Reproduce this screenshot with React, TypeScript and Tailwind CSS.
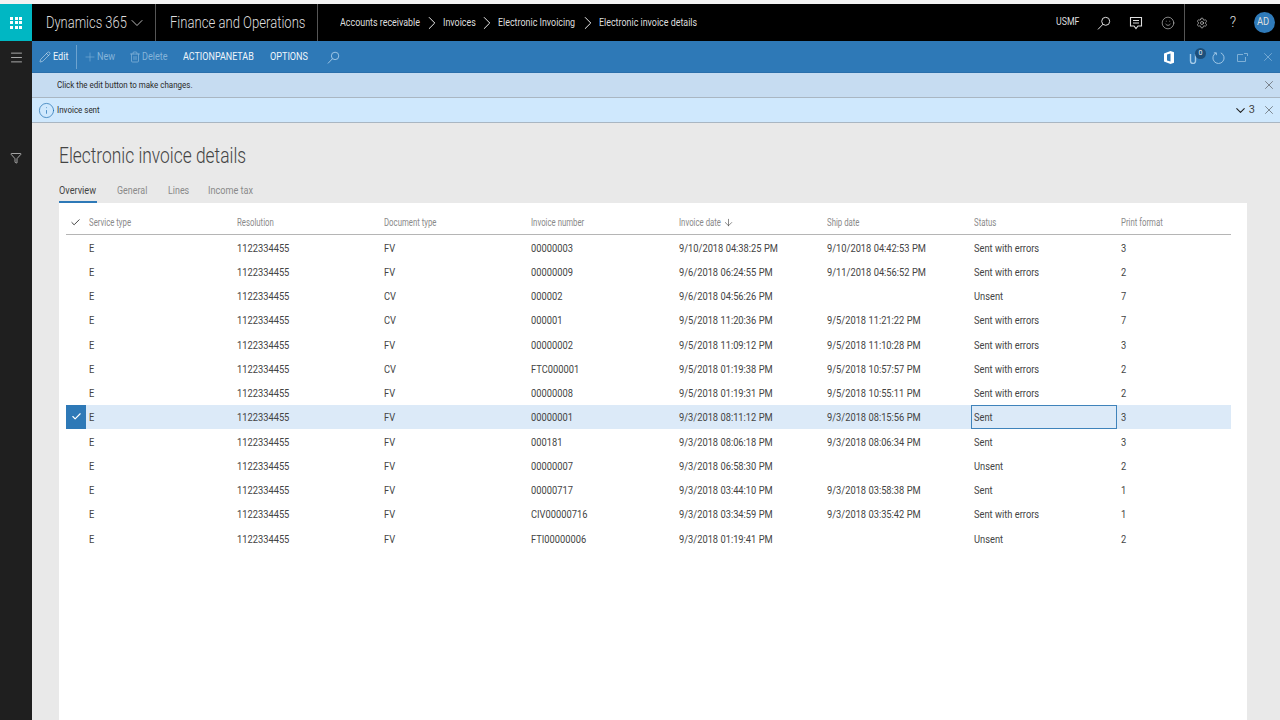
import React from "react";
import { Pencil, Plus, Trash2, Menu, ChevronDown, ChevronRight, X, Smile, Settings, Check, Filter, Info, ArrowDown } from "lucide-react";

const rows = [
  ["00000003", "9/10/2018 04:38:25 PM", "9/10/2018 04:42:53 PM", "Sent with errors", "3", "FV"],
  ["00000009", "9/6/2018 06:24:55 PM", "9/11/2018 04:56:52 PM", "Sent with errors", "2", "FV"],
  ["000002", "9/6/2018 04:56:26 PM", "", "Unsent", "7", "CV"],
  ["000001", "9/5/2018 11:20:36 PM", "9/5/2018 11:21:22 PM", "Sent with errors", "7", "CV"],
  ["00000002", "9/5/2018 11:09:12 PM", "9/5/2018 11:10:28 PM", "Sent with errors", "3", "FV"],
  ["FTC000001", "9/5/2018 01:19:38 PM", "9/5/2018 10:57:57 PM", "Sent with errors", "2", "CV"],
  ["00000008", "9/5/2018 01:19:31 PM", "9/5/2018 10:55:11 PM", "Sent with errors", "2", "FV"],
  ["00000001", "9/3/2018 08:11:12 PM", "9/3/2018 08:15:56 PM", "Sent", "3", "FV"],
  ["000181", "9/3/2018 08:06:18 PM", "9/3/2018 08:06:34 PM", "Sent", "3", "FV"],
  ["00000007", "9/3/2018 06:58:30 PM", "", "Unsent", "2", "FV"],
  ["00000717", "9/3/2018 03:44:10 PM", "9/3/2018 03:58:38 PM", "Sent", "1", "FV"],
  ["CIV00000716", "9/3/2018 03:34:59 PM", "9/3/2018 03:35:42 PM", "Sent with errors", "1", "FV"],
  ["FTI00000006", "9/3/2018 01:19:41 PM", "", "Unsent", "2", "FV"],
];

const columns = "grid grid-cols-[23px_148px_147px_147px_148px_148px_147px_147px_110px]";

// the screenshot is squeezed horizontally, so text is drawn narrower than its height
const T = ({ className, children }: { className?: string; children?: React.ReactNode }) => (
  <span className={`inline-block origin-left whitespace-nowrap ${className}`}>{children}</span>
);

const Cell = ({ children }: { children?: React.ReactNode }) => <T className="scale-x-[0.81] translate-y-[0.5px]">{children}</T>;
const Head = ({ children }: { children?: React.ReactNode }) => <T className="scale-x-[0.78]">{children}</T>;

const SearchIcon = ({ className }: { className?: string }) => (
  <svg viewBox="0 0 14 14" fill="none" stroke="currentColor" strokeWidth="1" className={className}>
    <circle cx="8.7" cy="5.3" r="4" />
    <path d="M6 8.2 1 13.4" />
  </svg>
);

const Crumb = ({ className, children }: { className: string; children: React.ReactNode }) => (
  <span className="flex items-center">
    <T className={`scale-x-[0.81] ${className}`}>{children}</T>
    <ChevronRight className="w-[22px] h-[22px] mx-[0.5px] text-white" strokeWidth={1} />
  </span>
);

export default function App() {
  return (
    <div className="h-[720px] w-[1280px] overflow-hidden bg-[#f2f2f2] font-['Roboto',sans-serif] pt-[4px] flex flex-col">
      {/* top nav */}
      <div className="h-[37px] bg-black flex items-center text-[#dedede] shrink-0">
        <div className="w-[32px] h-full bg-[#00b7c3] flex items-center justify-center">
          <div className="grid grid-cols-3 gap-[1.5px]">
            {Array.from({ length: 9 }).map((_, i) => (
              <div key={i} className="w-[3px] h-[3px] bg-white" />
            ))}
          </div>
        </div>
        <div className="w-[124px] h-full flex items-center pl-[14px] border-r border-[#555] text-[17px] font-light">
          <T className="w-[80px] scale-x-[0.76]">Dynamics 365</T>
          <ChevronDown className="w-[20px] h-[20px] ml-[1px] shrink-0" strokeWidth={1} />
        </div>
        <div className="w-[162px] h-full flex items-center pl-[14px] border-r border-[#555] text-[17px] font-light">
          <T className="scale-x-[0.77]">Finance and Operations</T>
        </div>
        <div className="flex items-center pl-[22px] pt-[1px] text-[11px] flex-1">
          <Crumb className="w-[80px]">Accounts receivable</Crumb>
          <Crumb className="w-[32px]">Invoices</Crumb>
          <Crumb className="w-[78px]">Electronic Invoicing</Crumb>
          <T className="scale-x-[0.81]">Electronic invoice details</T>
        </div>
        <div className="h-full flex items-center text-[11px]">
          <T className="w-[24px] mr-[17px] scale-x-[0.8]">USMF</T>
          <SearchIcon className="w-[14px] h-[14px] mr-[18px]" />
          <svg viewBox="0 0 14 14" fill="none" stroke="currentColor" strokeWidth="1.1" className="w-[14px] h-[14px] mr-[18px]">
            <path d="M1.5 1.5h11v8.5H9L7 12.5 5 10H1.5z" />
            <path d="M4 4.5h6M4 7h6" />
          </svg>
          <Smile className="w-[14px] h-[14px] mr-[9px]" strokeWidth={1} />
          <div className="h-full border-l border-[#555] flex items-center pl-[11px]">
            <Settings className="w-[12px] h-[12px] mr-[21px]" strokeWidth={1.25} />
            <span className="w-[8px] text-center text-[14px] font-light mr-[17px]">?</span>
            <div className="w-[21px] h-[21px] rounded-full bg-[#2f7ab9] flex items-center justify-center mr-[5px]">
              <T className="origin-center scale-x-[0.85]">AD</T>
            </div>
          </div>
        </div>
      </div>

      <div className="flex flex-1 min-h-0">
        {/* left rail */}
        <div className="w-[32px] bg-[#1f1f1f] flex flex-col items-center shrink-0 text-[#d0d0d0]">
          <Menu className="w-[15px] h-[15px] mt-[9px]" strokeWidth={1.25} />
          <Filter className="w-[12px] h-[12px] mt-[87px]" strokeWidth={1.5} />
        </div>

        <div className="flex-1 bg-[#e9e9e9] flex flex-col min-w-0">
          {/* action pane */}
          <div className="h-[32px] pt-[1px] bg-[#2e79b7] border-b border-[#2a6fab] flex items-center text-[11.5px] text-[#f0f6fb] shrink-0">
            <Pencil className="w-[12px] h-[12px] ml-[7px] mr-[2px]" strokeWidth={1} />
            <T className="w-[15px] scale-x-[0.79]">Edit</T>
            <div className="w-px h-[24px] bg-[#6ea3cf] ml-[8px] mr-[6px]" />
            <Plus className="w-[14px] h-[14px] text-[#85b4d9]" strokeWidth={1} />
            <T className="w-[18px] scale-x-[0.79] text-[#85b4d9]">New</T>
            <Trash2 className="w-[12px] h-[12px] text-[#85b4d9] ml-[14px] mr-[1px]" strokeWidth={1.5} />
            <T className="w-[26px] scale-x-[0.79] text-[#85b4d9]">Delete</T>
            <T className="w-[72px] ml-[15px] scale-x-[0.78]">ACTIONPANETAB</T>
            <T className="w-[39px] ml-[15px] scale-x-[0.79]">OPTIONS</T>
            <SearchIcon className="w-[13px] h-[13px] ml-[18px] text-[#a6cbe8]" />
            <div className="flex-1" />
            <svg width="10" height="13" viewBox="0 0 10 13" className="mr-[13px]">
              <path d="M0 2.5 6.5 0 10 1.2v10.6L6.5 13 0 10.5zM3 3.5v6l3.5 1V2.5z" fill="#fff" />
            </svg>
            <div className="relative mr-[11px] w-[14px] h-[14px]">
              <svg width="8" height="13" viewBox="0 0 8 13" fill="none" stroke="#a6cbe8" strokeWidth="1.4" className="ml-[2px] mt-[1px]">
                <path d="M1.5 3v7a2.5 2.5 0 0 0 5 0V3" />
              </svg>
              <div className="absolute -top-[2px] left-[8px] w-[11px] h-[11px] rounded-full bg-[#1d4f7a] text-[7px] flex items-center justify-center">0</div>
            </div>
            <svg viewBox="0 0 14 14" fill="none" stroke="#a6cbe8" strokeWidth="1" className="w-[13px] h-[13px] mr-[12px]">
              <path d="M4.5 2a6 6 0 1 0 5 0" />
              <path d="M4.7 4.5V2H2" />
            </svg>
            <svg width="11" height="9" viewBox="0 0 11 9" className="mr-[13px]" fill="none" stroke="#7fb0d6">
              <path d="M6 1.5H.5v7h8V4M7 .5h3.5V3" />
            </svg>
            <X className="w-[14px] h-[14px] mr-[5px] text-[#a6cbe8]" strokeWidth={1} />
          </div>

          {/* messages */}
          <div className="h-[25px] bg-[#c6dcf1] border-b border-[#a9b6c2] flex items-center text-[9.5px] text-[#2a2a2a] shrink-0 pl-[25px] pr-[4px] justify-between">
            <T className="scale-x-[0.84]">Click the edit button to make changes.</T>
            <X className="w-[14px] h-[14px] text-[#444]" strokeWidth={1} />
          </div>
          <div className="h-[25px] bg-[#cfe8fd] border-b border-[#a9b6c2] flex items-center text-[9.5px] text-[#2a2a2a] shrink-0 pl-[6px] pr-[4px]">
            <Info className="w-[17px] h-[17px] mr-[2px] text-[#1f6fb0]" strokeWidth={1} />
            <span className="flex-1">
              <T className="scale-x-[0.84]">Invoice sent</T>
            </span>
            <ChevronDown className="w-[15px] h-[15px] text-[#222]" strokeWidth={1.75} />
            <span className="text-[11px] text-[#444] ml-[1px] mr-[7px]">3</span>
            <X className="w-[14px] h-[14px] text-[#444]" strokeWidth={1} />
          </div>

          <div className="flex-1 flex flex-col min-h-0 pl-[27px] pr-[33px]">
            <h1 className="text-[22px] font-light text-[#444] mt-[18px] leading-[30px]">
              <T className="scale-x-[0.79]">Electronic invoice details</T>
            </h1>
            <div className="flex text-[11px] leading-[16px] text-[#8a8a8a] mt-[12px] h-[20px] shrink-0">
              <span className="w-[38px] h-[20px] text-[#444] border-b-2 border-[#2e79b7]">
                <T className="scale-x-[0.83]">Overview</T>
              </span>
              <T className="w-[31px] ml-[20px] scale-x-[0.81]">General</T>
              <T className="w-[21px] ml-[20px] scale-x-[0.81]">Lines</T>
              <T className="w-[46px] ml-[19px] scale-x-[0.83]">Income tax</T>
            </div>

            {/* grid */}
            <div className="flex-1 bg-white pt-[7px] pl-[7px] pr-[16px] text-[11.5px] text-[#444]">
              <div className={`${columns} h-[25px] items-center border-b border-[#b5b5b5] text-[10px] text-[#8a8a8a]`}>
                <Check className="w-[11px] h-[11px] ml-[4px] text-[#333]" strokeWidth={2} />
                <Head>Service type</Head>
                <Head>Resolution</Head>
                <Head>Document type</Head>
                <Head>Invoice number</Head>
                <span className="flex items-center">
                  <T className="w-[41px] scale-x-[0.78]">Invoice date</T>
                  <ArrowDown className="w-[11px] h-[11px] ml-[3px] text-[#333]" strokeWidth={1.25} />
                </span>
                <Head>Ship date</Head>
                <Head>Status</Head>
                <Head>Print format</Head>
              </div>
              {rows.map((r, i) => {
                const selected = i === 7;
                return (
                  <div key={i} className={`${columns} h-[24.25px] items-center ${selected ? "bg-[#dceaf8]" : ""}`}>
                    {selected ? (
                      <div className="h-full w-[20px] bg-[#2e79b7] flex items-center justify-center">
                        <Check className="w-[11px] h-[11px] text-white" strokeWidth={2.5} />
                      </div>
                    ) : (
                      <div />
                    )}
                    <Cell>E</Cell>
                    <Cell>1122334455</Cell>
                    <Cell>{r[5]}</Cell>
                    <Cell>{r[0]}</Cell>
                    <Cell>{r[1]}</Cell>
                    <Cell>{r[2]}</Cell>
                    {selected ? (
                      <span className="h-full -ml-[3px] mr-[4px] pl-[2px] border border-[#3f83bb] flex items-center">
                        <Cell>{r[3]}</Cell>
                      </span>
                    ) : (
                      <Cell>{r[3]}</Cell>
                    )}
                    <Cell>{r[4]}</Cell>
                  </div>
                );
              })}
            </div>
          </div>
        </div>
      </div>
    </div>
  );
}
